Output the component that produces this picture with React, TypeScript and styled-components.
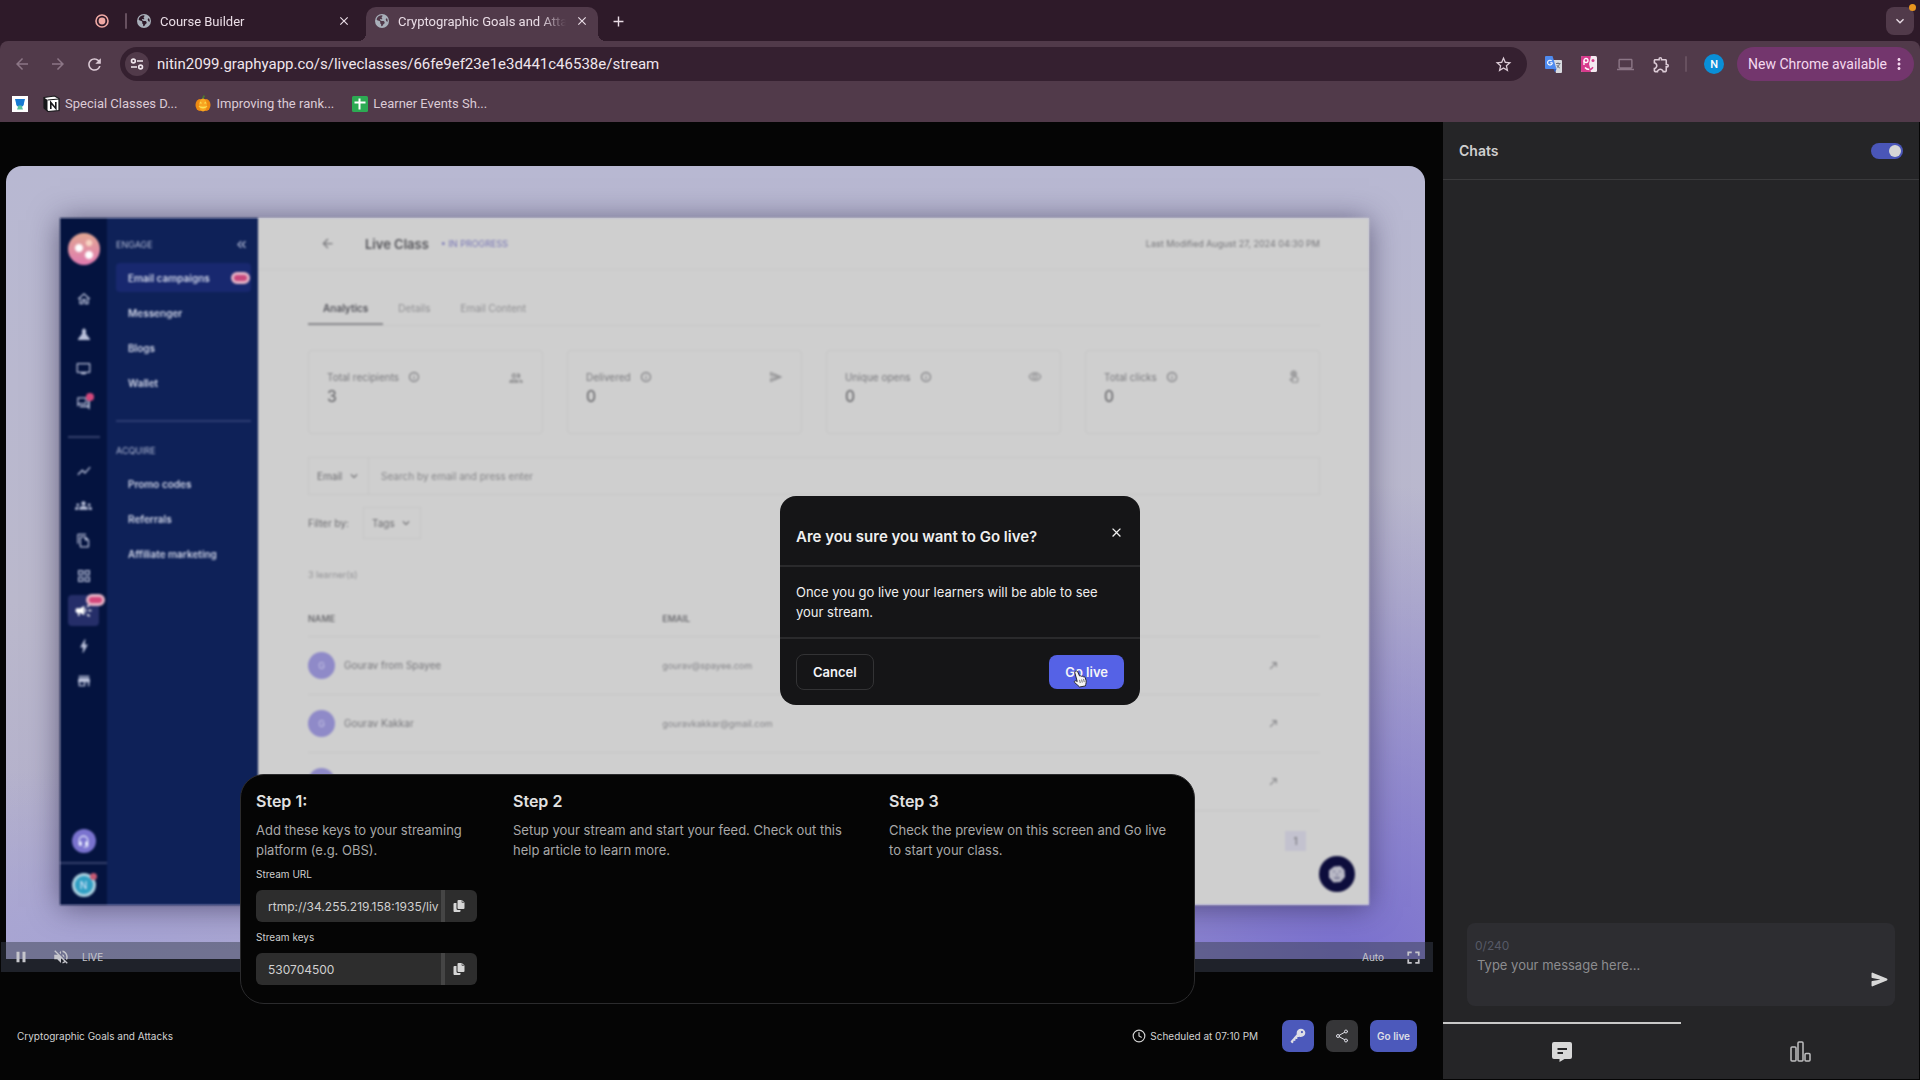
import React from "react";
import styled, { createGlobalStyle, css } from "styled-components";
import {
  MdArrowBack,
  MdArrowForward,
  MdRefresh,
  MdClose,
  MdAdd,
  MdStarBorder,
  MdOutlineExtension,
  MdMoreVert,
  MdExpandMore,
  MdVolumeOff,
  MdPause,
  MdFullscreen,
  MdOutlineHome,
  MdOutlineTv,
  MdOutlineForum,
  MdGroups,
  MdOutlineFileCopy,
  MdOutlineGridView,
  MdCampaign,
  MdBolt,
  MdStore,
  MdShowChart,
  MdKeyboardDoubleArrowLeft,
  MdOutlinePeople,
  MdInfoOutline,
  MdOutlineVisibility,
  MdOutlineSend,
  MdOutlineTouchApp,
  MdCallMade,
  MdHeadsetMic,
  MdOutlineLaptop,
} from "react-icons/md";
import { FaEarthAmericas } from "react-icons/fa6";
import { IoKey, IoSend, IoShareSocialOutline } from "react-icons/io5";
import { Clock } from "lucide-react";

const GlobalStyle = createGlobalStyle`
  *, *::before, *::after { box-sizing: border-box; }
  body { margin: 0; background: #050505; }
  button, input, textarea, select { font: inherit; color: inherit; margin: 0; }
  button { cursor: pointer; }
  svg { display: block; flex: none; }
`;

const Page = styled.div`
  min-height: 100vh;
  display: flex;
  flex-direction: column;
  font-family: Inter, "Liberation Sans", sans-serif;
  color: #e4e4e4;
`;

const bareButton = css`
  display: flex;
  align-items: center;
  justify-content: center;
  padding: 0;
  border: 0;
  background: transparent;
`;

/* ---------- Browser window ---------- */

const Browser = styled.header`
  background: #2e1a29;
  color: #eadde6;
  font-family: Roboto, "Liberation Sans", sans-serif;
`;

const TabStrip = styled.div`
  display: flex;
  align-items: flex-end;
  height: 41px;
  padding: 0 6px 0 95px;
`;

const RecordMark = styled.span`
  display: flex;
  align-items: center;
  height: 40px;
  padding-right: 16px;
`;

const Rule = styled.span<{ $tall?: boolean }>`
  width: 2px;
  height: 16px;
  border-radius: 1px;
  background: #67505f;
  margin: ${(p) => (p.$tall ? "0 0 12px" : "0 0 0 2px")};
`;

const Tab = styled.div<{ $active?: boolean }>`
  position: relative;
  display: flex;
  align-items: center;
  gap: 9px;
  width: 232px;
  height: 34px;
  margin-left: ${(p) => (p.$active ? "6px" : "1px")};
  padding: 0 9px 6px;
  font-size: 13px;
  border-radius: 10px 10px 0 0;
  ${(p) =>
    p.$active &&
    css`
      background: #513a4a;
      &::before,
      &::after {
        content: "";
        position: absolute;
        bottom: 0;
        width: 8px;
        height: 8px;
      }
      &::before {
        left: -8px;
        background: radial-gradient(circle at 0 0, transparent 8px, #513a4a 8px);
      }
      &::after {
        right: -8px;
        background: radial-gradient(circle at 100% 0, transparent 8px, #513a4a 8px);
      }
    `}
`;

const TabTitle = styled.span`
  flex: 1;
  min-width: 0;
  overflow: hidden;
  white-space: nowrap;
  mask-image: linear-gradient(90deg, #000 85%, transparent 100%);
`;

const TabButton = styled.button`
  ${bareButton}
  width: 14px;
  height: 14px;
`;

const NewTab = styled.button`
  ${bareButton}
  width: 28px;
  height: 34px;
  margin-left: 6px;
  padding-bottom: 6px;
`;

const TabSearch = styled.button`
  ${bareButton}
  position: relative;
  width: 28px;
  height: 28px;
  margin: 0 0 6px auto;
  border-radius: 8px;
  background: #513a4a;
  &::after {
    content: "";
    position: absolute;
    top: -3px;
    right: -2px;
    width: 7px;
    height: 7px;
    border-radius: 50%;
    background: #e8961f;
  }
`;

const ChromeBody = styled.div`
  background: #513a4a;
  border-radius: 8px 8px 0 0;
  padding: 6px 6px 0 8px;
`;

const Toolbar = styled.div`
  display: flex;
  align-items: center;
  gap: 8px;
`;

const IconButton = styled.button<{ $dim?: boolean }>`
  ${bareButton}
  width: 28px;
  height: 28px;
  color: ${(p) => (p.$dim ? "#8c7686" : "#dccbd6")};
`;

const AddressBar = styled.div`
  flex: 1;
  display: flex;
  align-items: center;
  height: 34px;
  margin: 0 4px;
  padding: 0 10px 0 5px;
  border-radius: 17px;
  background: #352030;
`;

const SiteInfo = styled.button`
  ${bareButton}
  width: 24px;
  height: 24px;
  border-radius: 50%;
  background: #513a4a;
`;

const AddressInput = styled.input`
  flex: 1;
  min-width: 0;
  padding: 0 8px;
  border: 0;
  outline: 0;
  background: transparent;
  color: #f0e6ed;
  font-size: 15px;
`;

const ProfileButton = styled.button`
  ${bareButton}
  width: 20px;
  height: 20px;
  margin: 0 5px 0 9px;
  border-radius: 50%;
  background: #0a8fd8;
  color: #fff;
  font-size: 11px;
  font-weight: 500;
`;

const UpdateButton = styled.button`
  ${bareButton}
  gap: 3px;
  height: 34px;
  padding: 0 6px 0 11px;
  border-radius: 17px;
  background: #73366d;
  color: #f5d9ef;
  font-size: 14px;
`;

const Bookmarks = styled.nav`
  display: flex;
  align-items: center;
  gap: 18px;
  height: 41px;
  padding: 4px 4px 0;
`;

const Bookmark = styled.a`
  display: flex;
  align-items: center;
  gap: 5px;
  color: #dccbd6;
  font-size: 13px;
  text-decoration: none;
  & + &:nth-child(2) {
    margin-left: -3px;
  }
`;

/* ---------- Stage ---------- */

const Workspace = styled.div`
  flex: 1;
  display: grid;
  grid-template-columns: minmax(0, 1fr) 476px;
  border-right: 1px solid #050505;
  border-bottom: 1px solid #050505;
`;

const Stage = styled.main`
  position: relative;
  display: flex;
  flex-direction: column;
  padding-top: 44px;
  background: #050505;
`;

const Video = styled.section`
  position: relative;
  display: flex;
  margin-right: 10px;
  padding: 0 8px 13px 6px;
  aspect-ratio: 1433 / 806;
`;

const Backdrop = styled.div`
  flex: 1;
  min-width: 0;
  display: flex;
  padding: 52px 56px 54px 54px;
  border-radius: 16px 16px 0 0;
  background:
    radial-gradient(ellipse 42% 60% at 94% 100%, #7a70cf 0%, rgba(128, 120, 205, 0) 100%),
    radial-gradient(ellipse 40% 22% at 8% 98%, #a6a3d4 0%, rgba(168, 165, 210, 0) 100%),
    linear-gradient(180deg, #b8b8d2 0%, #bab8cc 55%, #b0accb 100%);
`;

const Screen = styled.div`
  flex: 1;
  min-width: 0;
  display: flex;
  overflow: hidden;
  filter: blur(1px);
  color: #6a6a6e;
  font-size: 10px;
`;

const ScreenShadow = styled.div`
  flex: 1;
  min-width: 0;
  display: flex;
  box-shadow: 0 2px 28px rgba(40, 34, 70, 0.6);
`;

const Rail = styled.nav`
  display: flex;
  flex-direction: column;
  align-items: center;
  width: 47px;
  padding: 15px 0 8px;
  background: #04133f;
  color: #b9c0da;
`;

const RailLogo = styled.span`
  width: 32px;
  height: 32px;
  margin-bottom: 16px;
  border-radius: 50%;
  background:
    radial-gradient(circle 5px at 11px 15px, #fff 60%, transparent),
    radial-gradient(circle 5px at 21px 22px, #fff 60%, transparent),
    radial-gradient(circle 4px at 21px 10px, #f8d3c2 60%, transparent),
    linear-gradient(#e2a793, #e07bb0);
`;

const RailItem = styled.a<{ $active?: boolean }>`
  position: relative;
  display: flex;
  align-items: center;
  justify-content: center;
  width: 31px;
  height: 31px;
  margin: 2px 0;
  border-radius: 4px;
  color: ${(p) => (p.$active ? "#fff" : "inherit")};
  background: ${(p) => (p.$active ? "#252e69" : "transparent")};
`;

const RailBadge = styled.span<{ $wide?: boolean }>`
  position: absolute;
  top: ${(p) => (p.$wide ? "-1px" : "5px")};
  right: ${(p) => (p.$wide ? "-6px" : "5px")};
  width: ${(p) => (p.$wide ? "19px" : "8px")};
  height: ${(p) => (p.$wide ? "12px" : "8px")};
  border-radius: 6px;
  border: ${(p) => (p.$wide ? "3px solid #e5b3c6" : "0")};
  background: #d6487c;
`;

const RailRule = styled.span<{ $full?: boolean }>`
  width: ${(p) => (p.$full ? "100%" : "32px")};
  height: 2px;
  margin: ${(p) => (p.$full ? "9px 0" : "15px 0")};
  background: #34406c;
`;

const RailAvatar = styled.span<{ $color: string; $ring?: boolean }>`
  position: relative;
  display: flex;
  align-items: center;
  justify-content: center;
  width: 24px;
  height: 24px;
  border-radius: 50%;
  border: ${(p) => (p.$ring ? "3px solid #a9cfdf" : "0")};
  background: ${(p) => p.$color};
  color: #e8ecff;
  ${(p) =>
    p.$ring &&
    css`
      &::after {
        content: "";
        position: absolute;
        top: -3px;
        right: -4px;
        width: 7px;
        height: 7px;
        border-radius: 50%;
        background: #c65a74;
      }
    `}
`;

const RailFoot = styled.div`
  width: 100%;
  display: flex;
  flex-direction: column;
  align-items: center;
  margin-top: auto;
`;

const Menu = styled.nav`
  width: 151px;
  padding: 16px 7px 0 9px;
  background: #0e2158;
  color: #d3d8ea;
`;

const MenuHeading = styled.div`
  display: flex;
  align-items: center;
  justify-content: space-between;
  height: 20px;
  margin-bottom: 9px;
  padding-right: 2px;
  color: #b3bbd6;
  font-size: 9px;
`;

const MenuItem = styled.a<{ $active?: boolean }>`
  display: flex;
  align-items: center;
  justify-content: space-between;
  height: 29px;
  margin-bottom: 6px;
  padding: 0 1px 0 12px;
  border-radius: 4px;
  background: ${(p) => (p.$active ? "#18286f" : "transparent")};
  font-weight: 600;
  white-space: nowrap;
`;

const MenuBadge = styled.span`
  width: 19px;
  height: 12px;
  border: 3px solid #e5b3c6;
  border-radius: 6px;
  background: #c9487c;
`;

const MenuRule = styled.hr`
  height: 2px;
  margin: 23px 0 18px;
  border: 0;
  background: #2d3c72;
`;

const Report = styled.div`
  position: relative;
  flex: 1;
  min-width: 0;
  background: #cfcfcf;
`;

const ReportHeader = styled.div`
  display: flex;
  align-items: center;
  height: 52px;
  padding: 0 49px 0 62px;
  border-bottom: 1px solid #c9c9c9;
  font-size: 9px;
  color: #77777b;
`;

const ReportTitle = styled.h2`
  margin: 0 12px 0 30px;
  font-size: 13px;
  font-weight: 600;
  color: #55555a;
`;

const Status = styled.span`
  margin-right: auto;
  color: #7573b5;
`;

const ReportBody = styled.div`
  padding: 20px 49px 0 50px;
`;

const ReportTabs = styled.div`
  display: flex;
  margin-bottom: 24px;
  border-bottom: 1px solid #c6c6c6;
`;

const ReportTab = styled.button<{ $active?: boolean }>`
  ${bareButton}
  height: 35px;
  padding: 0 15px;
  font-weight: ${(p) => (p.$active ? 600 : 400)};
  color: ${(p) => (p.$active ? "#55555c" : "#8f8f92")};
  box-shadow: ${(p) => (p.$active ? "inset 0 -2px #8a8a8e" : "none")};
`;

const Stats = styled.div`
  display: grid;
  grid-template-columns: repeat(4, 1fr);
  gap: 24px;
  margin-bottom: 23px;
`;

const Stat = styled.div`
  display: flex;
  justify-content: space-between;
  height: 84px;
  padding: 17px 18px;
  border: 1px solid #c6c6c6;
  border-radius: 4px;
  color: #8e8e90;
  > svg {
    margin-top: 2px;
  }
`;

const StatLabel = styled.div`
  display: flex;
  align-items: center;
  gap: 9px;
  height: 18px;
  color: #77777b;
`;

const StatValue = styled.div`
  font-size: 16px;
  line-height: 20px;
  color: #5e5e62;
`;

const SearchRow = styled.div`
  display: flex;
  align-items: stretch;
  height: 38px;
  margin-bottom: 12px;
  border: 1px solid #c6c6c6;
`;

const Picker = styled.label<{ $boxed?: boolean }>`
  display: flex;
  align-items: center;
  gap: 4px;
  height: ${(p) => (p.$boxed ? "32px" : "auto")};
  padding: 0 7px 0 8px;
  border: 1px solid #c6c6c6;
  border-width: ${(p) => (p.$boxed ? "1px" : "0 1px 0 0")};
  select {
    appearance: none;
    border: 0;
    background: transparent;
    padding: 0;
  }
`;

const SearchInput = styled.input`
  flex: 1;
  padding: 0 12px;
  border: 0;
  background: transparent;
  &::placeholder {
    color: #858588;
    opacity: 1;
  }
`;

const FilterRow = styled.div`
  display: flex;
  align-items: center;
  gap: 14px;
  margin-bottom: 26px;
`;

const Count = styled.p`
  margin: 0 0 26px;
  font-size: 9px;
  line-height: 20px;
  color: #929295;
`;

const Table = styled.table`
  width: 100%;
  border-collapse: collapse;
  th {
    height: 25px;
    padding: 0 0 10px;
    font-size: 9px;
    font-weight: 600;
    text-align: left;
    color: #6f6f73;
  }
  td {
    height: 58px;
    padding: 0;
    color: #77777b;
  }
  tr {
    border-bottom: 1px solid #c5c5c5;
  }
  th:first-child {
    width: 35%;
  }
  th:last-child {
    width: 52px;
  }
`;

const Person = styled.div`
  display: flex;
  align-items: center;
  gap: 9px;
`;

const Initial = styled.span`
  display: flex;
  align-items: center;
  justify-content: center;
  width: 27px;
  height: 27px;
  border-radius: 50%;
  background: #8f8ac8;
  color: #c9c7e6;
  font-size: 9px;
`;

const Email = styled.span`
  font-size: 9px;
  color: #858589;
`;

const PageNumber = styled.button`
  ${bareButton}
  width: 21px;
  height: 20px;
  margin: 20px 14px 0 auto;
  background: #c3c2cf;
`;

const ChatBubble = styled.span`
  position: absolute;
  right: 14px;
  bottom: 13px;
  display: flex;
  align-items: center;
  justify-content: center;
  width: 36px;
  height: 36px;
  border-radius: 50%;
  background: #0d0d3c;
`;

const PlayerBar = styled.div`
  position: absolute;
  left: 1px;
  right: 0;
  bottom: 0;
  display: flex;
  align-items: center;
  justify-content: space-between;
  height: 30px;
  padding: 0 9px 0 11px;
  background: rgba(58, 64, 80, 0.5);
  color: #c6c6cc;
  font-size: 10px;
`;

const PlayerGroup = styled.div<{ $gap: number }>`
  display: flex;
  align-items: center;
  gap: ${(p) => p.$gap}px;
`;

const LiveLabel = styled.span`
  margin-left: -10px;
`;

const PlayerButton = styled.button`
  ${bareButton}
  min-width: 18px;
  height: 20px;
`;

/* ---------- Steps panel ---------- */

const Steps = styled.section`
  position: absolute;
  left: 240px;
  right: 248px;
  bottom: 75px;
  display: grid;
  grid-template-columns: 221px 340px minmax(0, 1fr);
  column-gap: 36px;
  height: 230px;
  padding: 14px 15px;
  border: 1px solid #2b2b2d;
  border-radius: 24px;
  background: #050505;
`;

const StepTitle = styled.h3`
  margin: 0 0 7px;
  font-size: 16px;
  font-weight: 600;
  line-height: 24px;
  color: #e2e2e2;
`;

const StepText = styled.p`
  margin: 0 0 6px;
  font-size: 13px;
  line-height: 20px;
  color: #a8a8a8;
`;

const FieldLabel = styled.label`
  display: block;
  margin-bottom: 8px;
  font-size: 10px;
  line-height: 16px;
  color: #d0d0d0;
`;

const Field = styled.div`
  display: flex;
  height: 32px;
  margin-bottom: 7px;
  border-radius: 6px;
  background: #2d2d2d;
  overflow: hidden;
`;

const FieldInput = styled.input`
  flex: 1;
  min-width: 0;
  padding: 0 0 0 12px;
  border: 0;
  border-right: 4px solid #454545;
  background: transparent;
  color: #d0d0d0;
  font-size: 12px;
`;

const CopyButton = styled.button`
  ${bareButton}
  width: 32px;
  padding-right: 4px;
`;

/* ---------- Footer ---------- */

const StageFooter = styled.footer`
  display: flex;
  align-items: center;
  gap: 12px;
  margin: auto 26px 27px 17px;
  color: #d2d2d2;
  font-size: 10px;
`;

const Schedule = styled.span`
  display: flex;
  align-items: center;
  gap: 4px;
  margin: 0 12px 0 auto;
`;

const ActionButton = styled.button<{ $quiet?: boolean }>`
  ${bareButton}
  min-width: 32px;
  height: 32px;
  border-radius: 7px;
  background: ${(p) => (p.$quiet ? "#363638" : "#4c59bb")};
  color: #dedee6;
`;

const ActionText = styled.span`
  padding: 0 7px;
  font-weight: 600;
`;

/* ---------- Chat ---------- */

const Chat = styled.aside`
  display: flex;
  flex-direction: column;
  background: #252527;
`;

const ChatHeader = styled.div`
  display: flex;
  align-items: center;
  justify-content: space-between;
  height: 58px;
  padding: 0 16px;
  border-bottom: 1px solid #3a3a3c;
`;

const ChatTitle = styled.h2`
  margin: 0;
  font-size: 14px;
  font-weight: 600;
  color: #cfcfcf;
`;

const Toggle = styled.input`
  appearance: none;
  position: relative;
  width: 32px;
  height: 16px;
  border-radius: 8px;
  background: #4a56b8;
  &::after {
    content: "";
    position: absolute;
    top: 2px;
    right: 2px;
    width: 12px;
    height: 12px;
    border-radius: 50%;
    background: #d6d6d6;
  }
`;

const Composer = styled.div`
  display: flex;
  margin: auto 24px 16px;
  height: 83px;
  padding: 15px 6px 0 8px;
  border-radius: 8px;
  background: #2d2d31;
`;

const ComposerText = styled.div`
  flex: 1;
  display: flex;
  flex-direction: column;
`;

const Counter = styled.label`
  font-size: 12px;
  line-height: 16px;
  color: #565966;
`;

const MessageInput = styled.textarea`
  height: 40px;
  padding: 2px;
  border: 0;
  outline: 0;
  resize: none;
  background: transparent;
  font-size: 13px;
  line-height: 18px;
  &::placeholder {
    color: #8c8c8f;
    opacity: 1;
  }
`;

const SendButton = styled.button`
  ${bareButton}
  align-self: flex-start;
  width: 20px;
  height: 20px;
  margin-top: 31px;
  color: #d8d8d8;
`;

const ChatTabs = styled.div`
  display: grid;
  grid-template-columns: 1fr 1fr;
`;

const ChatTab = styled.button<{ $active?: boolean }>`
  ${bareButton}
  height: 57px;
  border-top: 2px solid ${(p) => (p.$active ? "#c8c8c8" : "transparent")};
`;

/* ---------- Dialog ---------- */

const DialogLayer = styled.div`
  position: fixed;
  inset: 122px 0 1px;
  display: flex;
  align-items: center;
  justify-content: center;
  pointer-events: none;
`;

const Dialog = styled.div`
  width: 360px;
  border-radius: 16px;
  background: #151517;
  color: #efefef;
  pointer-events: auto;
`;

const DialogHeader = styled.div`
  display: flex;
  justify-content: space-between;
  padding: 28px 16px 15px;
  border-bottom: 2px solid #2a2a2c;
`;

const DialogTitle = styled.h2`
  margin: 0;
  font-size: 15px;
  font-weight: 600;
  line-height: 26px;
`;

const DialogClose = styled.button`
  ${bareButton}
  width: 16px;
  height: 16px;
`;

const DialogText = styled.p`
  margin: 0;
  padding: 15px 16px;
  border-bottom: 2px solid #2a2a2c;
  font-size: 13px;
  line-height: 20px;
`;

const DialogActions = styled.div`
  display: flex;
  align-items: center;
  justify-content: space-between;
  padding: 15px 16px;
`;

const DialogButton = styled.button<{ $primary?: boolean }>`
  ${bareButton}
  position: relative;
  height: ${(p) => (p.$primary ? "34px" : "36px")};
  padding: 0 16px;
  border: ${(p) => (p.$primary ? "0" : "1px solid #333335")};
  border-radius: 8px;
  background: ${(p) => (p.$primary ? "#5562e6" : "transparent")};
  color: #f4f4f8;
  font-size: 13px;
  font-weight: 600;
`;

const Pointer = styled.svg`
  position: absolute;
  left: 23px;
  top: 15px;
`;

/* ---------- Drawings ---------- */

const RecordIcon = () => (
  <svg width="14" height="14" viewBox="0 0 14 14">
    <circle cx="7" cy="7" r="6" fill="none" stroke="#f0a9a4" strokeWidth="1.6" />
    <circle cx="7" cy="7" r="3.4" fill="#f0a9a4" />
  </svg>
);

const TuneIcon = () => (
  <svg width="14" height="14" viewBox="0 0 14 14" fill="none" stroke="#f0e6ed" strokeWidth="1.6">
    <circle cx="3.4" cy="4" r="1.9" />
    <path d="M7 4h6M1 10h6" />
    <circle cx="10.6" cy="10" r="1.9" />
  </svg>
);

const TranslateIcon = () => (
  <svg width="17" height="17" viewBox="0 0 17 17">
    <path d="M7 4h9a1 1 0 0 1 1 1v11a1 1 0 0 1-1 1h-5z" fill="#d9dbe0" />
    <path d="M0 1a1 1 0 0 1 1-1h6.500l4 13H1a1 1 0 0 1-1-1z" fill="#4f8bf0" />
    <path d="M7.400 6.700H5.200M7.400 6.700a2.400 2.400 0 1 1-.7-1.800" fill="none" stroke="#fff" strokeWidth="1.100" />
    <path d="M11 7.500h4.500M13 6.500v1M14.500 7.500c-.4 2-1.500 3.500-2.700 4.300M11.800 9c.6 1.400 1.700 2.400 3 3" fill="none" stroke="#6b7280" />
    <path d="M8.500 13h3L10 16.500z" fill="#2f5fc4" />
  </svg>
);

const FaceIcon = () => (
  <svg width="16" height="16" viewBox="0 0 16 16">
    <rect width="16" height="16" rx="1.500" fill="#f4e9f0" />
    <path d="M1.500 0H10L8 8l2 8H1.500A1.500 1.500 0 0 1 0 14.500v-13A1.500 1.500 0 0 1 1.500 0z" fill="#d83b8d" />
    <circle cx="5" cy="4.500" r="2" fill="none" stroke="#fff" strokeWidth="1.300" />
    <path d="M3 4.500V9" stroke="#fff" strokeWidth="1.300" />
    <circle cx="12" cy="4.500" r="1.500" fill="#d83b8d" />
    <path d="M4 11.500c1.500 2 3 2 4.500 2" fill="none" stroke="#fff" strokeWidth="1.500" />
    <path d="M8.500 13.500c1.500 0 2.500-.8 3.500-2.200" fill="none" stroke="#d83b8d" strokeWidth="1.500" />
  </svg>
);

const TrophyIcon = () => (
  <svg width="16" height="16" viewBox="0 0 16 16">
    <rect width="16" height="16" fill="#fff" />
    <path d="M3 3h10l-1 4a4 4 0 0 1-8 0z" fill="#1779d2" />
    <path d="M6.500 9.500h3l1.500 4H5z" fill="#58c3a0" />
  </svg>
);

const NotionIcon = () => (
  <svg width="17" height="17" viewBox="0 0 17 17">
    <path d="M1 2.500 11.500 1 16 3.500V15.500L5 16.500 1 13z" fill="#fff" stroke="#17171a" strokeWidth="1.200" />
    <path d="M1 2.500 4.500 5v11.300L1 13z" fill="#17171a" />
    <path d="M4.500 5 16 4" stroke="#17171a" strokeWidth="1" fill="none" />
    <path d="M7.800 14V7.400l5 6V6.900" stroke="#17171a" strokeWidth="1.600" fill="none" />
  </svg>
);

const PumpkinIcon = () => (
  <svg width="16" height="17" viewBox="0 0 16 17">
    <path d="M8 4c0-1.500.3-2.500 1.500-3.300" stroke="#4d7a31" strokeWidth="1.800" fill="none" />
    <ellipse cx="5" cy="10" rx="4.500" ry="6" fill="#ee8a12" />
    <ellipse cx="11" cy="10" rx="4.500" ry="6" fill="#ee8a12" />
    <ellipse cx="8" cy="10" rx="4" ry="6.500" fill="#f8a521" />
    <path d="m4.500 8.500 1.200-2L7 8.500zM9 8.500l1.200-2 1.300 2zM3.500 11c1.500 3.300 7.500 3.300 9 0-2.500 1-6.500 1-9 0z" fill="#fbe053" />
  </svg>
);

const SheetIcon = () => (
  <svg width="16" height="16" viewBox="0 0 16 16">
    <rect width="16" height="16" rx="1.500" fill="#2cab53" />
    <path d="M2.500 6.500h11M7.500 2.500v11" stroke="#fff" strokeWidth="2" />
  </svg>
);

const ConeIcon = () => (
  <svg width="14" height="14" viewBox="0 0 14 14" fill="currentColor">
    <path d="M7 1l2.200 2.500-.4 3L13 12v1H1v-1l4.200-5.500-.4-3z" />
  </svg>
);

const CopyIcon = () => (
  <svg width="12" height="12" viewBox="0 0 12 12" fill="#d6d6d6">
    <path d="M5.500 0H9l2.500 2.500V8a1 1 0 0 1-1 1h-5a1 1 0 0 1-1-1V1a1 1 0 0 1 1-1z" />
    <path d="M1.500 3H3.500v5.500A1.500 1.500 0 0 0 5 10h2.500v1a1 1 0 0 1-1 1h-5a1 1 0 0 1-1-1V4a1 1 0 0 1 1-1z" />
    <path d="M9 0v2.500h2.500" fill="none" stroke="#2d2d2d" strokeWidth=".6" />
  </svg>
);

const MessageIcon = () => (
  <svg width="20" height="20" viewBox="0 0 20 20">
    <path d="M2 0h16a2 2 0 0 1 2 2v13a2 2 0 0 1-2 2h-5.500L7.500 20v-3H2a2 2 0 0 1-2-2V2a2 2 0 0 1 2-2z" fill="#d8d8d8" />
    <path d="M5.500 7h9.500M5.500 11h5.500" stroke="#252527" strokeWidth="1.800" />
  </svg>
);

const PollIcon = () => (
  <svg width="21" height="21" viewBox="0 0 21 21" fill="none" stroke="#bebec0" strokeWidth="1.500">
    <rect x="1" y="6" width="5" height="14" rx="1" />
    <rect x="8" y="1" width="5" height="19" rx="1" />
    <rect x="15" y="12.500" width="5" height="7.500" rx="1" />
  </svg>
);

const HandPointer = () => (
  <Pointer width="16" height="18" viewBox="0 0 18 20">
    <path
      d="M4.200 1.200c1-.5 1.900 0 2.300.9l2 4.500.4-.1c.8-.3 1.500 0 1.900.5.7-.3 1.500-.1 1.900.5.900-.3 1.800.1 2.200 1l1 3.400c.4 1.700-.2 2.800-.4 4.200l-.4 1.700-6.600 1.200c-1.500-2-3.700-3-5.600-5.100-.6-.7-.2-1.800.9-1.900.7 0 1.500.5 2.100.9L3.200 3c-.3-.7.2-1.500 1-1.800z"
      fill="#f5f5f5"
      stroke="#26262a"
      strokeWidth="1.100"
    />
    <path d="m8.500 11 .8 3.500M10.800 10.500l.8 3.500M13 10l.8 3.500" stroke="#55555a" strokeWidth=".9" />
  </Pointer>
);

/* ---------- Parts ---------- */

const stats = [
  { label: "Total recipients", value: 3, icon: <MdOutlinePeople size={16} /> },
  { label: "Delivered", value: 0, icon: <MdOutlineSend size={14} /> },
  { label: "Unique opens", value: 0, icon: <MdOutlineVisibility size={14} /> },
  { label: "Total clicks", value: 0, icon: <MdOutlineTouchApp size={14} /> },
];

const people = [
  { name: "Gourav from Spayee", email: "gourav@spayee.com" },
  { name: "Gourav Kakkar", email: "gouravkakkar@gmail.com" },
  { name: "", email: "" },
];

function SharedScreen() {
  return (
    <Screen>
      <Rail>
        <RailLogo />
        <RailItem><MdOutlineHome size={16} /></RailItem>
        <RailItem><ConeIcon /></RailItem>
        <RailItem><MdOutlineTv size={15} /></RailItem>
        <RailItem><MdOutlineForum size={15} /><RailBadge /></RailItem>
        <RailRule />
        <RailItem><MdShowChart size={16} /></RailItem>
        <RailItem><MdGroups size={17} /></RailItem>
        <RailItem><MdOutlineFileCopy size={15} /></RailItem>
        <RailItem><MdOutlineGridView size={16} /></RailItem>
        <RailItem $active><MdCampaign size={19} /><RailBadge $wide /></RailItem>
        <RailItem><MdBolt size={18} /></RailItem>
        <RailItem><MdStore size={16} /></RailItem>
        <RailFoot>
          <RailAvatar $color="#7a73cf"><MdHeadsetMic size={13} /></RailAvatar>
          <RailRule $full />
          <RailAvatar $color="#2f9fc4" $ring>N</RailAvatar>
        </RailFoot>
      </Rail>
      <Menu>
        <MenuHeading>ENGAGE<MdKeyboardDoubleArrowLeft size={15} /></MenuHeading>
        <MenuItem $active>Email campaigns<MenuBadge /></MenuItem>
        <MenuItem>Messenger</MenuItem>
        <MenuItem>Blogs</MenuItem>
        <MenuItem>Wallet</MenuItem>
        <MenuRule />
        <MenuHeading>ACQUIRE</MenuHeading>
        <MenuItem>Promo codes</MenuItem>
        <MenuItem>Referrals</MenuItem>
        <MenuItem>Affiliate marketing</MenuItem>
      </Menu>
      <Report>
        <ReportHeader>
          <MdArrowBack size={15} />
          <ReportTitle>Live Class</ReportTitle>
          <Status>• IN PROGRESS</Status>
          Last Modified August 27, 2024 04:30 PM
        </ReportHeader>
        <ReportBody>
          <ReportTabs>
            <ReportTab $active>Analytics</ReportTab>
            <ReportTab>Details</ReportTab>
            <ReportTab>Email Content</ReportTab>
          </ReportTabs>
          <Stats>
            {stats.map((s) => (
              <Stat key={s.label}>
                <div>
                  <StatLabel>{s.label}<MdInfoOutline size={12} /></StatLabel>
                  <StatValue>{s.value}</StatValue>
                </div>
                {s.icon}
              </Stat>
            ))}
          </Stats>
          <SearchRow>
            <Picker>
              <select aria-label="Search field"><option>Email</option></select>
              <MdExpandMore size={14} />
            </Picker>
            <SearchInput aria-label="Search recipients" placeholder="Search by email and press enter" />
          </SearchRow>
          <FilterRow>
            Filter by:
            <Picker $boxed>
              <select aria-label="Filter"><option>Tags</option></select>
              <MdExpandMore size={14} />
            </Picker>
          </FilterRow>
          <Count>3 learner(s)</Count>
          <Table>
            <thead>
              <tr><th>NAME</th><th>EMAIL</th><th /></tr>
            </thead>
            <tbody>
              {people.map((p, i) => (
                <tr key={i}>
                  <td><Person><Initial>G</Initial>{p.name}</Person></td>
                  <td><Email>{p.email}</Email></td>
                  <td><MdCallMade size={11} /></td>
                </tr>
              ))}
            </tbody>
          </Table>
          <PageNumber>1</PageNumber>
        </ReportBody>
        <ChatBubble>
          <svg width="18" height="18" viewBox="0 0 18 18">
            <path d="M6 1.500 12.500 1l4 4 .5 7-4.500 5-7 .5L1 12.500V5.500z" fill="#b9b9c6" />
            <path d="M6 6.500h.1M12 6.500h.1M9 9.500h.1M7 13h4" stroke="#7c7c96" strokeWidth="1.800" strokeLinecap="round" />
          </svg>
        </ChatBubble>
      </Report>
    </Screen>
  );
}

function BrowserChrome() {
  return (
    <Browser>
      <TabStrip>
        <RecordMark><RecordIcon /></RecordMark>
        <Rule $tall />
        <Tab>
          <FaEarthAmericas size={14} color="#a9b0ba" />
          <TabTitle>Course Builder</TabTitle>
          <TabButton aria-label="Close tab"><MdClose size={14} /></TabButton>
        </Tab>
        <Tab $active>
          <FaEarthAmericas size={14} color="#a9b0ba" />
          <TabTitle>Cryptographic Goals and Atta</TabTitle>
          <TabButton aria-label="Close tab"><MdClose size={14} /></TabButton>
        </Tab>
        <NewTab aria-label="New tab"><MdAdd size={17} /></NewTab>
        <TabSearch aria-label="Search tabs"><MdExpandMore size={16} /></TabSearch>
      </TabStrip>
      <ChromeBody>
        <Toolbar>
          <IconButton $dim aria-label="Back"><MdArrowBack size={18} /></IconButton>
          <IconButton $dim aria-label="Forward"><MdArrowForward size={18} /></IconButton>
          <IconButton aria-label="Reload"><MdRefresh size={19} /></IconButton>
          <AddressBar>
            <SiteInfo aria-label="Site information"><TuneIcon /></SiteInfo>
            <AddressInput
              aria-label="Address"
              defaultValue="nitin2099.graphyapp.co/s/liveclasses/66fe9ef23e1e3d441c46538e/stream"
            />
            <IconButton aria-label="Bookmark this page"><MdStarBorder size={19} /></IconButton>
          </AddressBar>
          <IconButton aria-label="Translate"><TranslateIcon /></IconButton>
          <IconButton aria-label="Extension"><FaceIcon /></IconButton>
          <IconButton $dim aria-label="Screen capture"><MdOutlineLaptop size={17} /></IconButton>
          <IconButton aria-label="Extensions"><MdOutlineExtension size={19} /></IconButton>
          <Rule />
          <ProfileButton aria-label="Profile">N</ProfileButton>
          <UpdateButton>New Chrome available<MdMoreVert size={18} /></UpdateButton>
        </Toolbar>
        <Bookmarks>
          <Bookmark href="#" aria-label="Bookmark"><TrophyIcon /></Bookmark>
          <Bookmark href="#"><NotionIcon />Special Classes D...</Bookmark>
          <Bookmark href="#"><PumpkinIcon />Improving the rank...</Bookmark>
          <Bookmark href="#"><SheetIcon />Learner Events Sh...</Bookmark>
        </Bookmarks>
      </ChromeBody>
    </Browser>
  );
}

function StreamField({ id, label, value }: { id: string; label: string; value: string }) {
  return (
    <>
      <FieldLabel htmlFor={id}>{label}</FieldLabel>
      <Field>
        <FieldInput id={id} readOnly value={value} />
        <CopyButton aria-label={`Copy ${label}`}><CopyIcon /></CopyButton>
      </Field>
    </>
  );
}

export default function App() {
  return (
    <Page>
      <GlobalStyle />
      <BrowserChrome />
      <Workspace>
        <Stage>
          <Video>
            <Backdrop>
              <ScreenShadow><SharedScreen /></ScreenShadow>
            </Backdrop>
            <PlayerBar>
              <PlayerGroup $gap={22}>
                <PlayerButton aria-label="Pause"><MdPause size={18} /></PlayerButton>
                <PlayerButton aria-label="Unmute"><MdVolumeOff size={18} /></PlayerButton>
                <LiveLabel>LIVE</LiveLabel>
              </PlayerGroup>
              <PlayerGroup $gap={19}>
                <PlayerButton>Auto</PlayerButton>
                <PlayerButton aria-label="Full screen"><MdFullscreen size={21} /></PlayerButton>
              </PlayerGroup>
            </PlayerBar>
          </Video>
          <StageFooter>
            Cryptographic Goals and Attacks
            <Schedule><Clock size={14} strokeWidth={2} />Scheduled at 07:10 PM</Schedule>
            <ActionButton aria-label="Stream keys"><IoKey size={18} /></ActionButton>
            <ActionButton $quiet aria-label="Share"><IoShareSocialOutline size={16} /></ActionButton>
            <ActionButton><ActionText>Go live</ActionText></ActionButton>
          </StageFooter>
          <Steps>
            <div>
              <StepTitle>Step 1:</StepTitle>
              <StepText>Add these keys to your streaming platform (e.g. OBS).</StepText>
              <StreamField id="stream-url" label="Stream URL" value="rtmp://34.255.219.158:1935/liv" />
              <StreamField id="stream-key" label="Stream keys" value="530704500" />
            </div>
            <div>
              <StepTitle>Step 2</StepTitle>
              <StepText>Setup your stream and start your feed. Check out this help article to learn more.</StepText>
            </div>
            <div>
              <StepTitle>Step 3</StepTitle>
              <StepText>Check the preview on this screen and Go live to start your class.</StepText>
            </div>
          </Steps>
        </Stage>
        <Chat>
          <ChatHeader>
            <ChatTitle>Chats</ChatTitle>
            <Toggle type="checkbox" role="switch" defaultChecked aria-label="Enable chats" />
          </ChatHeader>
          <Composer>
            <ComposerText>
              <Counter htmlFor="message">0/240</Counter>
              <MessageInput id="message" placeholder="Type your message here..." />
            </ComposerText>
            <SendButton aria-label="Send"><IoSend size={17} /></SendButton>
          </Composer>
          <ChatTabs>
            <ChatTab $active aria-label="Chat"><MessageIcon /></ChatTab>
            <ChatTab aria-label="Polls"><PollIcon /></ChatTab>
          </ChatTabs>
        </Chat>
      </Workspace>
      <DialogLayer>
        <Dialog role="dialog" aria-labelledby="dialog-title">
          <DialogHeader>
            <DialogTitle id="dialog-title">Are you sure you want to Go live?</DialogTitle>
            <DialogClose aria-label="Close"><MdClose size={15} /></DialogClose>
          </DialogHeader>
          <DialogText>Once you go live your learners will be able to see your stream.</DialogText>
          <DialogActions>
            <DialogButton>Cancel</DialogButton>
            <DialogButton $primary>Go live<HandPointer /></DialogButton>
          </DialogActions>
        </Dialog>
      </DialogLayer>
    </Page>
  );
}
